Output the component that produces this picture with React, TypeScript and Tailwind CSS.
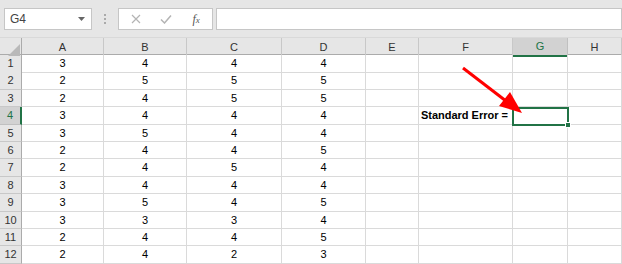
import React from "react";

const cols = ["A", "B", "C", "D", "E", "F", "G", "H"];
const data: (string | number)[][] = [
  [3, 4, 4, 4],
  [2, 5, 5, 5],
  [2, 4, 5, 5],
  [3, 4, 4, 4],
  [3, 5, 4, 4],
  [2, 4, 4, 5],
  [2, 4, 5, 4],
  [3, 4, 4, 4],
  [3, 5, 4, 5],
  [3, 3, 3, 4],
  [2, 4, 4, 5],
  [2, 4, 2, 3],
];

const gridCols = "grid grid-cols-[22px_82px_83px_95px_84px_53px_94px_55px_1fr]";

export default function App() {
  return (
    <div
      className="relative w-[622px] h-[264px] overflow-hidden bg-white"
      style={{ fontFamily: '"Liberation Sans", Arial, sans-serif' }}
    >
      {/* toolbar */}
      <div className="h-[38px] bg-[#e6e6e6] flex items-start pt-[8px] pl-[4px] border-b border-[#d9d9d9]">
        <div className="w-[88px] h-[22px] bg-white border border-[#c6c6c6] flex items-center justify-between pl-[5px] pr-[6px]">
          <span className="text-[12px] text-[#444]">G4</span>
          <svg width="7" height="4" viewBox="0 0 7 4">
            <path d="M0 0 L7 0 L3.5 4 Z" fill="#666" />
          </svg>
        </div>
        <div className="w-[26px] h-[22px] flex flex-col items-center justify-center gap-[2px]">
          <div className="w-[2px] h-[2px] bg-[#aaa]" />
          <div className="w-[2px] h-[2px] bg-[#aaa]" />
          <div className="w-[2px] h-[2px] bg-[#aaa]" />
        </div>
        <div className="w-[95px] h-[22px] bg-white border border-[#c6c6c6] flex items-center">
          <div className="w-[34px] flex justify-center">
            <svg width="10" height="10" viewBox="0 0 10 10">
              <path d="M1 1 L9 9 M9 1 L1 9" stroke="#b4b4b4" strokeWidth="1.2" />
            </svg>
          </div>
          <div className="w-[28px] flex justify-center">
            <svg width="12" height="10" viewBox="0 0 12 10">
              <path d="M1 5.5 L4.5 9 L11 1.5" stroke="#b4b4b4" strokeWidth="1.5" fill="none" />
            </svg>
          </div>
          <div className="w-[32px] flex justify-center">
            <span
              className="text-[12px] italic text-[#555]"
              style={{ fontFamily: '"Liberation Serif", "Times New Roman", serif' }}
            >
              f<span className="text-[9px]">x</span>
            </span>
          </div>
        </div>
        <div className="ml-[3px] flex-1 h-[22px] bg-white border border-[#c6c6c6]" />
      </div>

      {/* column headers */}
      <div className={`${gridCols} h-[17px] bg-[#e6e6e6] border-b border-[#ababab]`}>
        <div className="relative border-r border-[#ababab]">
          <svg className="absolute right-[1px] bottom-[1px]" width="12" height="12" viewBox="0 0 12 12">
            <path d="M12 0 L12 12 L0 12 Z" fill="#b9b9b9" />
          </svg>
        </div>
        {cols.map((c) =>
          c === "G" ? (
            <div
              key={c}
              className="flex items-center justify-center text-[11px] text-[#217346] bg-[#d2d2d2] border-r border-[#c0c0c0] border-b-2 border-b-[#217346]"
            >
              {c}
            </div>
          ) : (
            <div
              key={c}
              className="flex items-center justify-center text-[11px] text-[#333] border-r border-[#c8c8c8]"
            >
              {c}
            </div>
          )
        )}
      </div>

      {/* rows */}
      {data.map((row, i) => {
        const sel = i === 3;
        return (
          <div key={i} className={`${gridCols} h-[17.4px]`}>
            <div
              className={
                sel
                  ? "flex items-center justify-center text-[11px] text-[#217346] bg-[#d2d2d2] border-b border-[#c0c0c0] border-r-2 border-r-[#217346]"
                  : "flex items-center justify-center text-[11px] text-[#333] bg-[#e6e6e6] border-b border-[#c8c8c8] border-r border-r-[#ababab]"
              }
            >
              {i + 1}
            </div>
            {cols.map((c, j) => (
              <div
                key={c}
                className="flex items-center justify-center text-[11px] text-black border-r border-b border-[#dadada]"
              >
                {j < 4 ? row[j] : ""}
                {sel && c === "F" ? (
                  <span className="w-full text-right pr-[4px] font-bold text-[11px]">Standard Error =</span>
                ) : null}
              </div>
            ))}
          </div>
        );
      })}

      {/* selected cell G4 */}
      <div className="absolute left-[512px] top-[107px] w-[57px] h-[19px] border-2 border-[#217346]">
        <div className="absolute right-[-4px] bottom-[-4px] w-[6px] h-[6px] bg-[#217346] border border-white" />
      </div>

      {/* red arrow */}
      <svg className="absolute left-0 top-0 pointer-events-none" width="622" height="264">
        <line x1="463" y1="68" x2="506" y2="101" stroke="#ff0000" strokeWidth="3" />
        <path d="M522 113 L499 106 L510 92 Z" fill="#ff0000" />
      </svg>
    </div>
  );
}
